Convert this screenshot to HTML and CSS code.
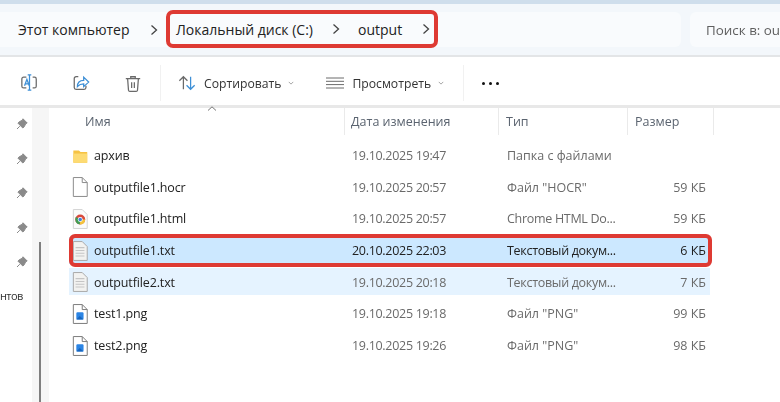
FILE: index.html
```html
<!DOCTYPE html>
<html lang="ru">
<head>
<meta charset="utf-8">
<title>output</title>
<link rel="stylesheet" href="styles.css">
</head>
<body>
<div class="window">
  <div class="topstrip"></div>
  <header class="addressbar">
    <div class="breadcrumb">
      <span class="crumb crumb-pc">Этот компьютер</span>
      <svg class="chev chev-first" viewBox="0 0 8 12"><path d="M1.5 1.5 6.500 6l-5 4.500"/></svg>
      <div class="highlight">
        <span class="crumb">Локальный диск (C:)</span>
        <svg class="chev chev-mid" viewBox="0 0 8 12"><path d="M1.5 1.5 6.500 6l-5 4.500"/></svg>
        <span class="crumb crumb-out">output</span>
        <svg class="chev chev-last" viewBox="0 0 8 12"><path d="M1.5 1.5 6.500 6l-5 4.500"/></svg>
      </div>
    </div>
    <div class="search">Поиск в: ou</div>
  </header>
  <nav class="toolbar">
    <svg class="tool tool-rename" viewBox="0 0 20 20"><path class="grey" d="M6.500 3.500H3.500a2 2 0 0 0-2 2v8a2 2 0 0 0 2 2h3M13.500 3.500h2a2 2 0 0 1 2 2v8a2 2 0 0 1-2 2h-2"/><path class="blue" d="M8 1h4M8 18h4M10 1v17M4.500 13l2.600-7 2.600 7M5.400 11h4"/></svg>
    <svg class="tool tool-share" viewBox="0 0 20 20"><path class="grey" d="M7 3H4.500a2 2 0 0 0-2 2v10a2 2 0 0 0 2 2h9a2 2 0 0 0 2-2v-2"/><path class="blue" d="M6 14c0-5 3-7 7-7V3.500l5.500 5.500-5.500 5V11c-3 0-5 .8-7 3z"/></svg>
    <svg class="tool tool-trash" viewBox="0 0 20 20"><path class="grey" d="M2 4.500h16M7.500 4.500V2.500h5v2M4 4.500l1 13a1.500 1.500 0 0 0 1.500 1.300h7a1.500 1.500 0 0 0 1.500-1.300l1-13M8.500 8.500v6.500M11.500 8.500v6.500"/></svg>
    <span class="divider divider-a"></span>
    <svg class="tool tool-sort" viewBox="0 0 20 20"><path class="grey" d="M6 17V3M1.500 7.500 6 3l4.500 4.500"/><path class="blue" d="M14 3v14M9.500 12.500 14 17l4.500-4.500"/></svg>
    <span class="tool-label">Сортировать</span>
    <svg class="caret" viewBox="0 0 8 5"><path d="M1 1l3 3 3-3"/></svg>
    <svg class="tool tool-view" viewBox="0 0 18 12"><path class="grey thin" d="M0 1h18M0 4.300h18M0 7.600h18M0 11h18"/></svg>
    <span class="tool-label">Просмотреть</span>
    <svg class="caret" viewBox="0 0 8 5"><path d="M1 1l3 3 3-3"/></svg>
    <span class="divider divider-b"></span>
    <span class="more"><i></i><i></i><i></i></span>
  </nav>
  <div class="content">
    <aside class="sidebar">
      <div class="pins">
        <svg class="pin" viewBox="0 0 12 12"><path d="M7 .8 11.200 5 9.800 5.600 8.200 8.800 6.800 10 2 5.200 3.200 3.800 6.400 2.200zM3.800 8.200 1 11"/></svg>
        <svg class="pin" viewBox="0 0 12 12"><path d="M7 .8 11.200 5 9.800 5.600 8.200 8.800 6.800 10 2 5.200 3.200 3.800 6.400 2.200zM3.800 8.200 1 11"/></svg>
        <svg class="pin" viewBox="0 0 12 12"><path d="M7 .8 11.200 5 9.800 5.600 8.200 8.800 6.800 10 2 5.200 3.200 3.800 6.400 2.200zM3.800 8.200 1 11"/></svg>
        <svg class="pin" viewBox="0 0 12 12"><path d="M7 .8 11.200 5 9.800 5.600 8.200 8.800 6.800 10 2 5.200 3.200 3.800 6.400 2.200zM3.800 8.200 1 11"/></svg>
        <svg class="pin" viewBox="0 0 12 12"><path d="M7 .8 11.200 5 9.800 5.600 8.200 8.800 6.800 10 2 5.200 3.200 3.800 6.400 2.200zM3.800 8.200 1 11"/></svg>
      </div>
      <span class="side-label">нтов</span>
      <div class="side-track"><div class="side-thumb"></div></div>
    </aside>
    <main class="files">
      <div class="header">
        <svg class="sort-up" viewBox="0 0 10 5"><path d="M1 4.500 5 .8l4 3.700"/></svg>
        <span class="h-name">Имя</span>
        <span class="h-date">Дата изменения</span>
        <span class="h-type">Тип</span>
        <span class="h-size">Размер</span>
      </div>
      <div class="row">
        <svg class="ficon" viewBox="0 0 18 18"><path fill="#f6c344" d="M3 4h5l1.500 1.500H15.500V15H3z"/><path fill="#fddb73" d="M3 6.800h12.500V15H3z"/></svg>
        <span class="name">архив</span><span class="date">19.10.2025 19:47</span><span class="type">Папка с файлами</span><span class="size"></span>
      </div>
      <div class="row">
        <svg class="ficon" viewBox="0 0 18 18"><path class="page" d="M3 .5h8l4.500 4.500v12.500H3zM11 .5V5h4.500"/></svg>
        <span class="name">outputfile1.hocr</span><span class="date">19.10.2025 20:57</span><span class="type">Файл "HOCR"</span><span class="size">59 КБ</span>
      </div>
      <div class="row">
        <svg class="ficon" viewBox="0 0 18 18"><path class="page-soft" d="M3 .5h8l4.500 4.500v12.500H3z"/><circle cx="9.200" cy="9.500" r="4.500" fill="#d8493c"/><path fill="#f3c33c" d="M9.200 9.500h4.500a4.500 4.500 0 0 1-5 4.500z"/><path fill="#3f9e55" d="M9.200 9.500 8.700 14A4.500 4.500 0 0 1 5.300 7.300z"/><circle cx="9.200" cy="9.500" r="2.200" fill="#fff"/><circle cx="9.200" cy="9.500" r="1.600" fill="#3f7fdc"/></svg>
        <span class="name">outputfile1.html</span><span class="date">19.10.2025 20:57</span><span class="type type-cut">Chrome HTML Do...</span><span class="size">59 КБ</span>
      </div>
      <div class="row row-selected">
        <svg class="ficon" viewBox="0 0 18 18"><path class="page-fill" d="M3 .5h8l4.500 4.500v12.500H3z"/><path class="lines" d="M5 6h8M5 8.500h8M5 11h8M5 13.500h8"/></svg>
        <span class="name">outputfile1.txt</span><span class="date">20.10.2025 22:03</span><span class="type type-cut">Текстовый докум...</span><span class="size">6 КБ</span>
      </div>
      <div class="row row-hover">
        <svg class="ficon" viewBox="0 0 18 18"><path class="page-fill" d="M3 .5h8l4.500 4.500v12.500H3z"/><path class="lines" d="M5 6h8M5 8.500h8M5 11h8M5 13.500h8"/></svg>
        <span class="name">outputfile2.txt</span><span class="date">19.10.2025 20:18</span><span class="type type-cut">Текстовый докум...</span><span class="size">7 КБ</span>
      </div>
      <div class="row">
        <svg class="ficon" viewBox="0 0 18 18"><path class="page-dark" d="M3 .5h8l4.500 4.500v12.500H3zM11 .5V5h4.500"/><rect x="5.700" y="7.500" width="6.500" height="6.500" rx="1" fill="#2b84e4"/><path fill="#1765bd" d="M5.700 14 8.800 10.800 12.200 14z"/></svg>
        <span class="name">test1.png</span><span class="date">19.10.2025 19:18</span><span class="type">Файл "PNG"</span><span class="size">99 КБ</span>
      </div>
      <div class="row">
        <svg class="ficon" viewBox="0 0 18 18"><path class="page-dark" d="M3 .5h8l4.500 4.500v12.500H3zM11 .5V5h4.500"/><rect x="5.700" y="7.500" width="6.500" height="6.500" rx="1" fill="#2b84e4"/><path fill="#1765bd" d="M5.700 14 8.800 10.800 12.200 14z"/></svg>
        <span class="name">test2.png</span><span class="date">19.10.2025 19:26</span><span class="type">Файл "PNG"</span><span class="size">98 КБ</span>
      </div>
    </main>
  </div>
</div>
</body>
</html>
```
FILE: styles.css
```css
* { box-sizing: border-box; }
html, body { margin: 0; padding: 0; }
body {
  width: 780px;
  height: 402px;
  overflow: hidden;
  background: #fff;
  font-family: "Open Sans", "Noto Sans", sans-serif;
  color: #1f1f1f;
}
.window { width: 780px; height: 402px; display: flex; flex-direction: column; filter: blur(0.35px); }
.topstrip { height: 4px; background: #cfdeec; flex: none; }

.addressbar {
  height: 53px;
  flex: none;
  background: #f3f7fb;
  border-bottom: 2px solid #e3e5e7;
  display: flex;
  align-items: center;
  gap: 9px;
}
.breadcrumb {
  flex: none;
  width: 681px;
  height: 35px;
  background: #f9fbfd;
  border-radius: 0 6px 6px 0;
  display: flex;
  align-items: center;
  padding-left: 18px;
  font-size: 14px;
}
.crumb { white-space: nowrap; color: #222; }
.crumb-pc { width: 114px; }
.chev { width: 8px; height: 12px; flex: none; fill: none; stroke: #444; stroke-width: 1.3; }
.chev-first { margin-left: 18px; }
.highlight {
  width: 272px;
  height: 38px;
  margin: -1px 0 0 8px;
  border: 4px solid #de3a33;
  border-radius: 7px;
  display: flex;
  align-items: center;
  padding-left: 6px;
  flex: none;
}
.chev-mid { margin-left: 19px; }
.crumb-out { margin-left: 18px; }
.chev-last { margin-left: 20px; }
.search {
  flex: 1;
  min-width: 0;
  height: 35px;
  background: #f9fbfd;
  border-radius: 6px 0 0 6px;
  padding-left: 16px;
  display: flex;
  align-items: center;
  font-size: 13.4px;
  color: #5f5f5f;
  white-space: nowrap;
}

.toolbar {
  height: 48px;
  flex: none;
  display: flex;
  align-items: center;
  padding: 4px 0 0 20px;
  font-size: 12.2px;
  color: #333;
}
.tool { flex: none; fill: none; }
.grey { stroke: #6a6a6a; stroke-width: 1.4; fill: none; }
.grey.thin { stroke-width: 1; }
.blue { stroke: #3d8fd6; stroke-width: 1.4; fill: none; }
.tool-rename { width: 19px; height: 18px; }
.tool-share { width: 18px; height: 18px; margin-left: 33px; }
.tool-trash { width: 18px; height: 19px; margin-left: 34px; }
.divider { width: 1px; height: 36px; background: #f1f1f1; flex: none; }
.divider-a { margin-left: 18px; }
.divider-b { margin-left: 19px; }
.tool-sort { width: 18px; height: 18px; margin-left: 17px; }
.tool-label { margin-left: 8px; white-space: nowrap; }
.caret { width: 6px; height: 4px; margin-left: 7px; fill: none; stroke: #888; stroke-width: 1; flex: none; }
.tool-view { width: 18px; height: 12px; margin-left: 32px; }
.more { display: flex; gap: 4px; margin-left: 18px; }
.more i { width: 3px; height: 3px; border-radius: 50%; background: #111; display: block; }

.content {
  flex: 1;
  display: flex;
  border-top: 3px solid #e8e8e8;
  min-height: 0;
}
.sidebar { width: 49px; flex: none; position: relative; display: flex; background: #fff; }
.pins {
  width: 32px;
  padding: 10px 0 0 16px;
  display: flex;
  flex-direction: column;
  gap: 22.500px;
  flex: none;
}
.pin { width: 12px; height: 12px; fill: #8a8a8a; stroke: #8a8a8a; stroke-width: 1; flex: none; }
.side-label {
  position: absolute;
  left: 0;
  top: 180px;
  font-size: 11px;
  letter-spacing: -0.6px;
  white-space: nowrap;
  color: #333;
}
.side-track { width: 17px; background: #f6f6f6; flex: none; position: relative; }
.side-thumb { position: absolute; left: 7px; top: 134px; bottom: 0; width: 2px; background: #7f7f7f; }

.files { flex: 1; padding-left: 21px; min-width: 0; }
.header {
  height: 33.500px;
  display: grid;
  grid-template-columns: 275px 154px 129px 86px;
  align-items: start;
  width: 644px;
  font-size: 12.5px;
  color: #5b6470;
  position: relative;
}
.header span { height: 27px; display: flex; align-items: center; border-right: 1px solid #eaeaea; white-space: nowrap; }
.header .h-name { padding-left: 15px; }
.header .h-date { padding-left: 6px; }
.header .h-type { padding-left: 7px; }
.header .h-size { padding-left: 7px; }
.sort-up { position: absolute; left: 137px; top: -2px; width: 10px; height: 5px; fill: none; stroke: #777; stroke-width: 1; }

.row {
  height: 27px;
  width: 641px;
  margin: 0 0 4.700px -1px;
  padding: 1px 4px 0 0;
  display: grid;
  grid-template-columns: 25px 258px 155px 1fr 60px;
  align-items: center;
  font-size: 12.5px;
  color: #6a6a6a;
  white-space: nowrap;
}
.row .name { color: #222; letter-spacing: -0.13px; }
.row .date { letter-spacing: -0.3px; }
.type-cut { letter-spacing: -0.3px; }
.ficon { width: 20px; height: 20px; margin-left: 1px; }
.size { text-align: right; }
.page { fill: #fff; stroke: #8c8c8c; stroke-width: 0.9; }
.page-soft { fill: #fbfbfb; stroke: #d4d4d4; stroke-width: 0.9; }
.page-fill { fill: #f2f2f0; stroke: #a9a9a9; stroke-width: 0.9; }
.page-dark { fill: #fff; stroke: #7d7d7d; stroke-width: 0.9; }
.lines { stroke: #c5c5c5; stroke-width: 1; fill: none; }
.row-selected {
  background: #cce8ff;
  color: #222;
  position: relative;
}
.row-selected::after {
  content: "";
  position: absolute;
  inset: -3px -2px -3px 0;
  border: 4px solid #de3a33;
  border-radius: 6px;
}
.row-hover { background: #e5f3ff; }
```
